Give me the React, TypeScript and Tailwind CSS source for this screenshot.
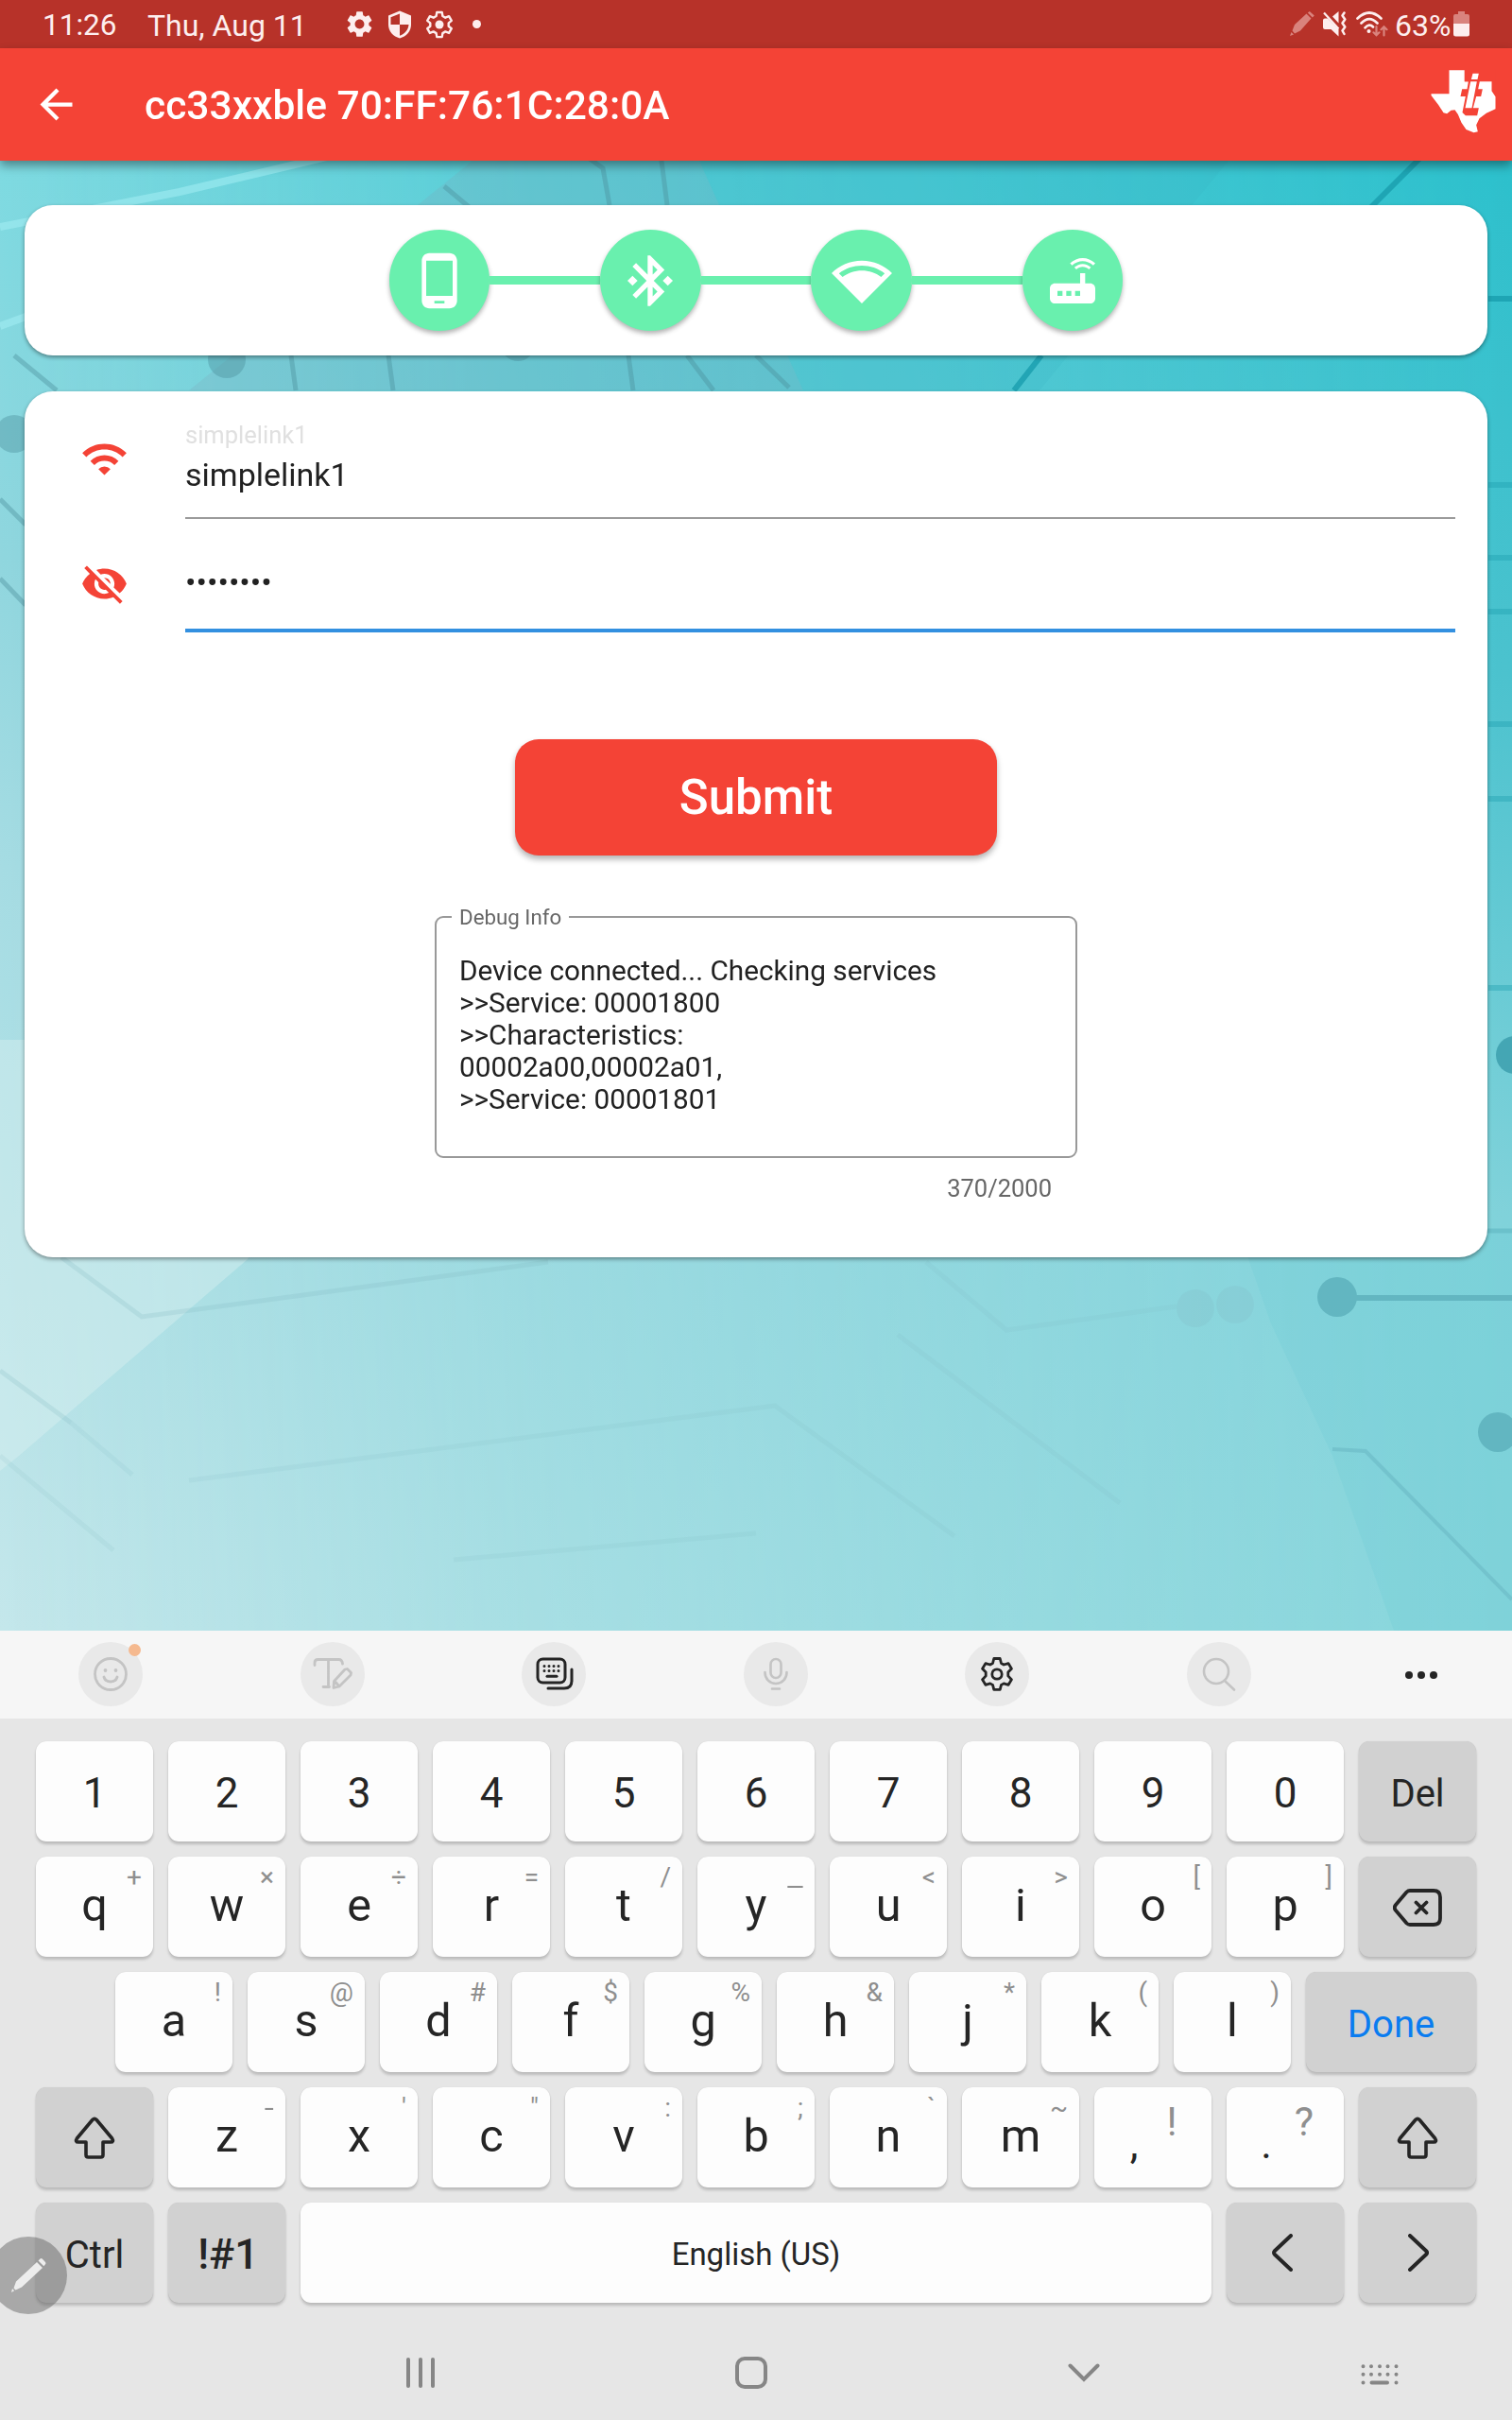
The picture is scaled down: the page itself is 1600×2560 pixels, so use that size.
import React from "react";
import {
  MdArrowBack,
  MdPhoneAndroid,
  MdBluetoothConnected,
  MdRouter,
  MdWifi,
  MdVisibilityOff,
  MdSettings,
} from "react-icons/md";

function StatusBar() {
  return (
    <header className="flex h-[51px] items-center bg-[#b73229] text-[31.5px] leading-none text-[#fdeeee]">
      <span className="ml-[45px] w-[111px] whitespace-nowrap pt-[3px]">11:26</span>
      <span className="w-[206px] whitespace-nowrap pt-[3px] text-[32px]">Thu, Aug 11</span>
      <MdSettings className="ml-[2px] size-[33px]" />
      <svg className="ml-[11px] size-[30px]" viewBox="0 0 30 30">
        <path d="M15 0.500L27 5.500V15c0 7-5 12.500-12 14.500C8 27.500 3 22 3 15V5.500z" fill="#fdeeee" />
        <path d="M15 3.500v11.500H5.500V7.300zM15 15h9.500c-.3 5.500-4.300 10-9.500 11.700z" fill="#b73229" />
      </svg>
      <svg className="ml-[12px] size-[30px]" viewBox="0 0 30 30" fill="none" stroke="#fdeeee" strokeWidth="2.400">
        <path d="M12.300 2h5.400l.7 4 2.900 1.700 3.800-1.500 2.700 4.700-3.100 2.500v3.300l3.100 2.500-2.700 4.700-3.800-1.500-2.900 1.700-.7 4h-5.400l-.7-4-2.900-1.700-3.800 1.500-2.700-4.700 3.100-2.500v-3.300l-3.100-2.500 2.700-4.700 3.800 1.500 2.900-1.700z" strokeLinejoin="round" />
        <circle cx="15" cy="15" r="4.500" fill="#fdeeee" stroke="none" />
      </svg>
      <span className="ml-[20px] size-[9px] rounded-full bg-[#fdeeee]" />
      <svg className="ml-[855px] size-[27px]" viewBox="0 0 27 27" fill="#d9837d">
        <path d="M1 26l1.500-4 2.500 2.500zM3.500 20.500L6 14 18.500 2.500l5 5L12 20.500 6 23.500zM19.800 1.500l2-1.500 5 4.500-2 2z" />
      </svg>
      <svg className="ml-[9px] h-[27px] w-[25px]" viewBox="0 0 25 27">
        <path d="M0 9.500q0-2 2-2h3L16.500 19v7.500L8.500 19H2q-2 0-2-2zM10 5.500L16.500 0v12.500z" fill="#fdeeee" />
        <path d="M1 1.500l15.500 17" stroke="#fdeeee" strokeWidth="2.200" />
        <path d="M22.500 1.500l-2 3 2.800 4-2.800 4 2.800 4-2.800 4 2 3.500" fill="none" stroke="#fdeeee" strokeWidth="2.500" strokeLinecap="round" strokeLinejoin="round" />
      </svg>
      <svg className="ml-[10px] h-[27px] w-[34px]" viewBox="0 0 34 27" fill="none" strokeLinecap="round">
        <path d="M1.500 7.500Q14-4.500 26.500 7.500M5.500 12.500Q14 4 22.500 12.500M9.500 17.300Q14 12.500 18 16.500" stroke="#fdeeee" strokeWidth="2.700" />
        <circle cx="13.500" cy="21" r="2" fill="#fdeeee" />
        <path d="M21.500 16v9M18.500 22.300l3 3 3-3M29.500 25.500v-9M26.500 19.200l3-3 3 3" stroke="#d9837d" strokeWidth="2.200" />
      </svg>
      <span className="ml-[7px] w-[62px] whitespace-nowrap pt-[3px] text-[32px]">63%</span>
      <svg className="h-[27px] w-[17px]" viewBox="0 0 17 27">
        <path d="M5 0h7v3h3q2 0 2 2v8H0V5q0-2 2-2h3z" fill="#d9837d" />
        <path d="M0 13h17v11q0 2.500-2.500 2.500h-12Q0 26.500 0 24z" fill="#fdeeee" />
      </svg>
    </header>
  );
}

function StateLogo() {
  return (
    <svg className="h-[67px] w-[69px]" viewBox="104 71 206 201">
      <path
        fill="#fff"
        d="M162 72H211V108H297V138L309 156V195L280 208L258 225L248 246L253 267L240 270L216 260L201 238L190 212L180 198L168 199L155 210L144 207L128 182L105 152V147H162z"
      />
      <path
        fill="#f44336"
        d="M211 71H310V107H259L254 132H268L263 155H248L238 192H256L251 216H214L204 206L214 155H198L203 132H219L223 108H211z"
      />
      <path fill="#fff" d="M237 82H256L252 101H232zM230 108H250L234 192H213z" />
    </svg>
  );
}

function AppBar() {
  return (
    <div className="relative z-10 flex h-[119px] items-center bg-[#f44336] text-white shadow-[0_5px_10px_rgba(0,0,0,0.4)]">
      <MdArrowBack className="ml-[34px] size-[51px]" />
      <h1 className="ml-[68px] whitespace-nowrap pt-[3px] text-[42.5px] font-medium leading-none">
        cc33xxble 70:FF:76:1C:28:0A
      </h1>
      <div className="-mt-[7px] ml-auto mr-[17px]">
        <StateLogo />
      </div>
    </div>
  );
}

function Backdrop() {
  return (
    <svg className="absolute inset-0 h-full w-full" viewBox="0 170 1600 1555" preserveAspectRatio="none">
      <defs>
        <linearGradient id="left" x1="0" y1="170" x2="0" y2="1725" gradientUnits="userSpaceOnUse">
          <stop offset="0" stopColor="#7edae1" />
          <stop offset="0.270" stopColor="#90d6de" />
          <stop offset="0.480" stopColor="#a6dce3" />
          <stop offset="0.720" stopColor="#b2e1e6" />
          <stop offset="1" stopColor="#c4e7eb" />
        </linearGradient>
        <linearGradient id="right" x1="0" y1="170" x2="0" y2="1725" gradientUnits="userSpaceOnUse">
          <stop offset="0" stopColor="#2cc0cc" />
          <stop offset="0.350" stopColor="#4bc2ce" />
          <stop offset="0.720" stopColor="#80d2da" />
          <stop offset="1" stopColor="#86d5db" />
        </linearGradient>
        <linearGradient id="fade" x1="0" y1="0" x2="1600" y2="0" gradientUnits="userSpaceOnUse">
          <stop offset="0" stopColor="#000" />
          <stop offset="0.350" stopColor="#777" />
          <stop offset="1" stopColor="#fff" />
        </linearGradient>
        <mask id="across" maskUnits="userSpaceOnUse" x="0" y="170" width="1600" height="1555">
          <rect y="170" width="1600" height="1555" fill="url(#fade)" />
        </mask>
      </defs>
      <rect y="170" width="1600" height="1555" fill="url(#left)" />
      <rect y="170" width="1600" height="1555" fill="url(#right)" mask="url(#across)" />
      <path d="M500 170H740L850 413H200z" fill="#7fa6b4" opacity="0.220" />
      <path d="M740 170H1300L1100 413H850z" fill="#38b0c0" opacity="0.180" />
      <path d="M0 1100H380L262 1332L20 1540L0 1556z" fill="#dcf1f1" opacity="0.420" />
      <path d="M1310 1300L1345 1400L1410 1540L1475 1725H1600V1300z" fill="#5fc6d4" opacity="0.160" />
      <g fill="none" stroke="#a4eef4" strokeWidth="8" opacity="0.550">
        <path d="M0 240L190 203L350 165M0 345L30 334" />
      </g>
      <g fill="none" stroke="#4c8f9c" strokeWidth="5" opacity="0.400">
        <path d="M470 197L500 222M620 165L638 178L645 217M700 170L706 217M308 376L313 413M411 376L416 413M665 376L670 413M727 376L755 413M15 376L60 413M0 528L27 555M0 612L27 640M800 376L835 410" />
      </g>
      <g fill="#4c8f9c" opacity="0.400">
        <circle cx="240" cy="380" r="20" />
        <circle cx="548" cy="364" r="18" />
        <circle cx="15" cy="459" r="20" />
      </g>
      <g fill="none" stroke="#1a9eae" strokeWidth="6" opacity="0.800">
        <path d="M1505 165L1450 220M1102 376L1073 413M1575 316H1600" />
        <path d="M1575 513H1600M1575 590H1600M1575 647H1600M1575 766H1600M1575 845H1600M1575 1045H1600" opacity="0.450" />
      </g>
      <circle cx="1603" cy="1116" r="20" fill="#3a9cab" opacity="0.800" />
      <g fill="#5fb2be" opacity="0.900">
        <circle cx="1415" cy="1372" r="21" />
        <circle cx="1585" cy="1515" r="21" />
      </g>
      <path d="M1430 1373H1600" stroke="#63b6c1" strokeWidth="6" />
      <path d="M1570 1302H1600" stroke="#5db3bf" strokeWidth="5" opacity="0.500" />
      <path d="M1410 1533L1445 1535L1600 1692" fill="none" stroke="#6bb9c4" strokeWidth="4" opacity="0.600" />
      <g fill="none" stroke="#7fb4bf" strokeWidth="5">
        <path d="M65 1330L150 1393L580 1335M0 1450L75 1505" opacity="0.220" />
        <path d="M75 1505L140 1560M0 1540L120 1640M980 1335L1065 1407L1245 1382M950 1412L1185 1590M200 1566L820 1487L1010 1625M480 1650L800 1622" opacity="0.120" />
      </g>
      <g fill="#7fb4bf" opacity="0.180">
        <circle cx="1265" cy="1384" r="20" />
        <circle cx="1307" cy="1380" r="20" />
      </g>
    </svg>
  );
}

function NetworkWifi({ className }: { className?: string }) {
  return (
    <svg className={className} viewBox="0 0 24 24" fill="currentColor">
      <path d="M24 8.980C20.930 5.900 16.690 4 12 4S3.070 5.900 0 8.980L12 21 24 8.980zM2.920 9.070C5.510 7.080 8.670 6 12 6s6.490 1.080 9.080 3.070l-1.430 1.430C17.500 8.940 14.860 8 12 8s-5.500.94-7.650 2.510L2.920 9.070z" />
    </svg>
  );
}

const steps = [MdPhoneAndroid, MdBluetoothConnected, NetworkWifi, MdRouter];

function Stepper() {
  return (
    <section className="mx-[26px] mt-[47px] flex h-[159px] items-center justify-center rounded-[30px] bg-white shadow-[0_2px_4px_rgba(0,0,0,0.4)]">
      {steps.map((Icon, i) => (
        <React.Fragment key={i}>
          {i > 0 && <div className="h-[9px] w-[116.800px] bg-[#69f0ae]" />}
          <div className="flex size-[106.500px] items-center justify-center rounded-full bg-[#69f0ae] text-white shadow-[0_3px_5px_rgba(0,0,0,0.3)]">
            <Icon className="size-[64px]" />
          </div>
        </React.Fragment>
      ))}
    </section>
  );
}

function NetworkForm() {
  return (
    <section className="mx-[26px] mt-[38px] flex h-[916px] flex-col rounded-[30px] bg-white text-[#212121] shadow-[0_2px_4px_rgba(0,0,0,0.4)]">
      <div className="flex pl-[59px] pr-[34px]">
        <MdWifi className="mt-[46px] size-[51px] text-[#f44336]" />
        <div className="ml-[60px] h-[135px] flex-1 border-b-2 border-[#9b9b9b]">
          <div className="mt-[31px] text-[25.500px] leading-[30px] text-[#e0e0e0]">simplelink1</div>
          <div className="mt-[7px] text-[34px] leading-[40px]">simplelink1</div>
        </div>
      </div>
      <div className="flex pl-[59px] pr-[34px]">
        <MdVisibilityOff className="mt-[43px] size-[51px] text-[#f44336]" />
        <div className="ml-[60px] h-[120px] flex-1 border-b-4 border-[#3390e0]">
          <div className="mt-[47px] text-[34px] leading-[40px]">••••••••</div>
        </div>
      </div>
      <button className="mt-[113px] h-[123px] w-[510px] self-center rounded-[25px] bg-[#f44336] text-[51px] font-medium leading-none text-white shadow-[0_4px_6px_rgba(0,0,0,0.3)]">
        Submit
      </button>
      <fieldset className="mt-[52px] h-[268px] w-[680px] self-center rounded-[9px] border-2 border-[#999] px-[24px]">
        <legend className="-ml-[8px] px-[8px] text-[22.300px] leading-[26px] text-[#666]">Debug Info</legend>
        <div className="mt-[27px] whitespace-pre-line text-[29.750px] leading-[34px]">
          {"Device connected... Checking services\n>>Service: 00001800\n>>Characteristics:\n00002a00,00002a01,\n>>Service: 00001801"}
        </div>
      </fieldset>
      <div className="mt-[17px] w-[626px] self-center text-right text-[25.500px] leading-[30px] text-[#666]">370/2000</div>
    </section>
  );
}

function Tool({ children }: { children: React.ReactNode }) {
  return (
    <div className="relative mr-[166.500px] flex size-[68px] shrink-0 items-center justify-center rounded-full bg-[#e9e9e9]">
      {children}
    </div>
  );
}

function Toolbar() {
  return (
    <div className="flex h-[93px] items-center bg-[#f6f6f6] pb-[2px] pl-[83px]">
      <Tool>
        <svg className="size-[38px]" viewBox="0 0 38 38" fill="none" stroke="#c4c4c4" strokeWidth="2.800" strokeLinecap="round">
          <circle cx="19" cy="19" r="16.500" />
          <path d="M12 22q1.500 5 7 5t7-5" />
          <circle cx="13.500" cy="15" r="1.900" fill="#c4c4c4" stroke="none" />
          <circle cx="24.500" cy="15" r="1.900" fill="#c4c4c4" stroke="none" />
        </svg>
        <span className="absolute right-[2px] top-[2px] size-[13px] rounded-full bg-[#f5b98f]" />
      </Tool>
      <Tool>
        <svg className="size-[42px]" viewBox="0 0 42 42" fill="none" stroke="#c4c4c4" strokeWidth="2.800" strokeLinecap="round" strokeLinejoin="round">
          <path d="M2 11.500V9q0-3.500 3.500-3.500h22Q31 5.500 31.500 10M16.500 6v28M11 34.500h6.500M22 35l.5-6.500L34 16l2.500-.5 4 4-.5 2.500L28 34l-6 1.500zM23 28l5 6" />
        </svg>
      </Tool>
      <Tool>
        <svg className="size-[42px]" viewBox="0 0 42 42" fill="none" stroke="#252525" strokeWidth="3" strokeLinecap="round">
          <rect x="4" y="5" width="29" height="25" rx="5.500" />
          <path d="M40 16v12q0 8-8 8H15" />
          <path d="M14 23.200h10" />
          <path d="M11 12.500h.01M16 12.500h.01M21 12.500h.01M26 12.500h.01M11 17.500h.01M16 17.500h.01M21 17.500h.01M26 17.500h.01" />
        </svg>
      </Tool>
      <Tool>
        <svg className="size-[38px]" viewBox="0 0 38 38" fill="none" stroke="#c4c4c4" strokeWidth="2.600" strokeLinecap="round">
          <rect x="13.500" y="3" width="11" height="20" rx="5.500" />
          <path d="M7.500 17v.5a11.500 11.500 0 0023 0V17M15 34.500h8" />
        </svg>
      </Tool>
      <Tool>
        <svg className="size-[38px]" viewBox="0 0 38 38" fill="none" stroke="#252525" strokeWidth="2.800" strokeLinejoin="round">
          <path d="M15.800 2.500h6.400l1.300 5 2.700 1.500 4.900-1.400 3.300 5.600-3.600 3.800v3.900l3.600 3.800-3.300 5.600-4.900-1.400-2.700 1.500-1.300 5h-6.400l-1.300-5-2.700-1.500-4.900 1.400-3.300-5.600 3.600-3.800V17l-3.600-3.800 3.300-5.600L11.800 9l2.700-1.500z" />
          <circle cx="19" cy="19" r="5.200" />
        </svg>
      </Tool>
      <Tool>
        <svg className="size-[38px]" viewBox="0 0 38 38" fill="none" stroke="#c4c4c4" strokeWidth="2.600" strokeLinecap="round">
          <circle cx="16" cy="16" r="13" />
          <path d="M25 26l10 9.500" />
        </svg>
      </Tool>
      <div className="-ml-[3px] mt-[3px] flex gap-[5.500px]">
        <span className="size-[7.500px] rounded-full bg-[#252525]" />
        <span className="size-[7.500px] rounded-full bg-[#252525]" />
        <span className="size-[7.500px] rounded-full bg-[#252525]" />
      </div>
    </div>
  );
}

const keyShadow = "shadow-[0_3px_3px_rgba(0,0,0,0.18),0_0_1px_rgba(0,0,0,0.15)]";

function Key({ main, hint, digit }: { main: string; hint?: string; digit?: boolean }) {
  const wide = hint === "-" || hint === "_";
  return (
    <div className={`relative flex h-[106px] w-[124px] items-center justify-center rounded-[11px] bg-[#fdfdfd] leading-none ${keyShadow} ${digit ? "pt-[4px] text-[44px]" : "pb-px text-[48.500px]"}`}>
      {main}
      {hint && (
        <span className={`absolute right-[12px] top-[8px] text-[28px] leading-[28px] text-[#8f8f8f] ${wide ? "origin-right scale-x-130" : ""}`}>
          {hint}
        </span>
      )}
    </div>
  );
}

function PunctuationKey({ main, hint }: { main: string; hint: string }) {
  return (
    <div className={`flex h-[106px] w-[124px] rounded-[11px] bg-[#fdfdfd] ${keyShadow}`}>
      <span className="ml-[36px] mt-[36px] w-[12px] text-center text-[44px] leading-[48px]">{main}</span>
      <span className="ml-[19px] mt-[12px] w-[30px] text-center text-[43px] leading-[48px] text-[#8f8f8f]">{hint}</span>
    </div>
  );
}

function GrayKey({ children, className }: { children: React.ReactNode; className?: string }) {
  return (
    <div className={`flex h-[106px] items-center justify-center rounded-[11px] bg-[#d1d1d1] leading-none ${keyShadow} ${className ?? "w-[124px] pt-[5px] text-[40px]"}`}>
      {children}
    </div>
  );
}

function ShiftIcon() {
  return (
    <svg className="h-[46px] w-[44px]" viewBox="0 0 44 46" fill="none" stroke="#252525" strokeWidth="3.600" strokeLinejoin="round">
      <path d="M19.800 3.500q2.200-2.300 4.400 0L40.500 23q2.400 4-1.500 4h-8v13.500q0 2.500-2.500 2.500h-13q-2.500 0-2.500-2.500V27H5q-3.900 0-1.500-4z" />
    </svg>
  );
}

const digits = "1234567890".split("");
const topRow = [["q", "+"], ["w", "×"], ["e", "÷"], ["r", "="], ["t", "/"], ["y", "_"], ["u", "<"], ["i", ">"], ["o", "["], ["p", "]"]];
const homeRow = [["a", "!"], ["s", "@"], ["d", "#"], ["f", "$"], ["g", "%"], ["h", "&"], ["j", "*"], ["k", "("], ["l", ")"]];
const bottomRow = [["z", "-"], ["x", "'"], ["c", "\""], ["v", ":"], ["b", ";"], ["n", "`"], ["m", "~"]];

function Keyboard() {
  return (
    <div className="flex flex-col gap-4 px-[38px] pt-[24px] text-[#252525]">
      <div className="flex gap-4">
        {digits.map((d) => <Key key={d} main={d} digit />)}
        <GrayKey>Del</GrayKey>
      </div>
      <div className="flex gap-4">
        {topRow.map(([m, h]) => <Key key={m} main={m} hint={h} />)}
        <GrayKey className="w-[124px] pt-px">
          <svg className="h-[40px] w-[52px]" viewBox="0 0 52 40" fill="none" stroke="#252525" strokeWidth="3.800" strokeLinejoin="round" strokeLinecap="round">
            <path d="M18 2H43q7 0 7 7V31q0 7-7 7H18q-2 0-3.500-1.500L3 23q-2.500-3 0-6L14.500 3.500Q16 2 18 2zM24.500 14.500l11 11M35.500 14.500l-11 11" />
          </svg>
        </GrayKey>
      </div>
      <div className="flex gap-4 pl-[84px]">
        {homeRow.map(([m, h]) => <Key key={m} main={m} hint={h} />)}
        <GrayKey className="w-[180px] pt-[5px] text-[40px] text-[#0a7cf0]">Done</GrayKey>
      </div>
      <div className="flex gap-4">
        <GrayKey className="w-[124px] pt-px"><ShiftIcon /></GrayKey>
        {bottomRow.map(([m, h]) => <Key key={m} main={m} hint={h} />)}
        <PunctuationKey main="," hint="!" />
        <PunctuationKey main="." hint="?" />
        <GrayKey className="w-[124px] pt-px"><ShiftIcon /></GrayKey>
      </div>
      <div className="relative flex gap-4">
        <GrayKey>Ctrl</GrayKey>
        <GrayKey className="w-[124px] pl-[3px] pt-[3px] text-[45px] font-medium">!#1</GrayKey>
        <div className={`flex h-[106px] w-[964px] items-center justify-center rounded-[11px] bg-[#fdfdfd] pt-[3px] text-[33px] leading-none ${keyShadow}`}>
          English (US)
        </div>
        <GrayKey className="w-[124px]">
          <svg className="mr-[7px] h-[40px] w-[22px]" viewBox="0 0 22 40" fill="none" stroke="#252525" strokeWidth="4" strokeLinecap="round" strokeLinejoin="round">
            <path d="M20 2L3 18q-2 2 0 4L20 38" />
          </svg>
        </GrayKey>
        <GrayKey className="w-[124px]">
          <svg className="ml-[2px] h-[40px] w-[22px]" viewBox="0 0 22 40" fill="none" stroke="#252525" strokeWidth="4" strokeLinecap="round" strokeLinejoin="round">
            <path d="M2 2L19 18q2 2 0 4L2 38" />
          </svg>
        </GrayKey>
        <div className="absolute -left-[49px] top-[36px] flex size-[82px] items-center justify-center rounded-full bg-[rgba(86,86,86,0.43)]">
          <svg className="size-[38px]" viewBox="0 0 38 38" fill="#ededed">
            <path d="M1 37l1-4 2.200 2.200zM3.500 32.500L6 25.500 28 5l6 6L12 31.500 5.500 34.500zM29.500 3.500l2-2q1-1 2.200 0L37 5q1 1.200 0 2.300l-1.700 2z" />
          </svg>
        </div>
      </div>
    </div>
  );
}

function NavBar() {
  return (
    <nav className="mt-[41px] flex h-[66px] items-center text-[#868686]">
      <div className="ml-[430px] flex gap-[9px]">
        <span className="h-[32px] w-[4px] rounded-full bg-current" />
        <span className="h-[32px] w-[4px] rounded-full bg-current" />
        <span className="h-[32px] w-[4px] rounded-full bg-current" />
      </div>
      <div className="ml-[318px] size-[34px] rounded-[10px] border-4 border-current" />
      <svg className="ml-[318px] h-[20px] w-[34px]" viewBox="0 0 34 20" fill="none" stroke="currentColor" strokeWidth="4" strokeLinecap="round">
        <path d="M2.500 2.500L17 17 31.500 2.500" />
      </svg>
      <svg className="ml-[276px] mt-[3px] h-[22px] w-[40px]" viewBox="0 0 40 22" fill="none" stroke="currentColor" strokeWidth="4" strokeLinecap="round">
        <path d="M2.500 2.200h.01M11 2.200h.01M20 2.200h.01M28.500 2.200h.01M37.500 2.200h.01M2.500 10.800h.01M11 10.800h.01M20 10.800h.01M28.500 10.800h.01M37.500 10.800h.01M2.500 19.500h.01M11.500 19.500H28M37.500 19.500h.01" />
      </svg>
    </nav>
  );
}

export default function App() {
  return (
    <div className="flex h-[2560px] w-[1600px] flex-col overflow-hidden bg-[#e6e6e6] font-[Roboto,sans-serif]">
      <StatusBar />
      <AppBar />
      <main className="relative h-[1555px] shrink-0">
        <Backdrop />
        <div className="relative flex flex-col">
          <Stepper />
          <NetworkForm />
        </div>
      </main>
      <Toolbar />
      <Keyboard />
      <NavBar />
    </div>
  );
}
